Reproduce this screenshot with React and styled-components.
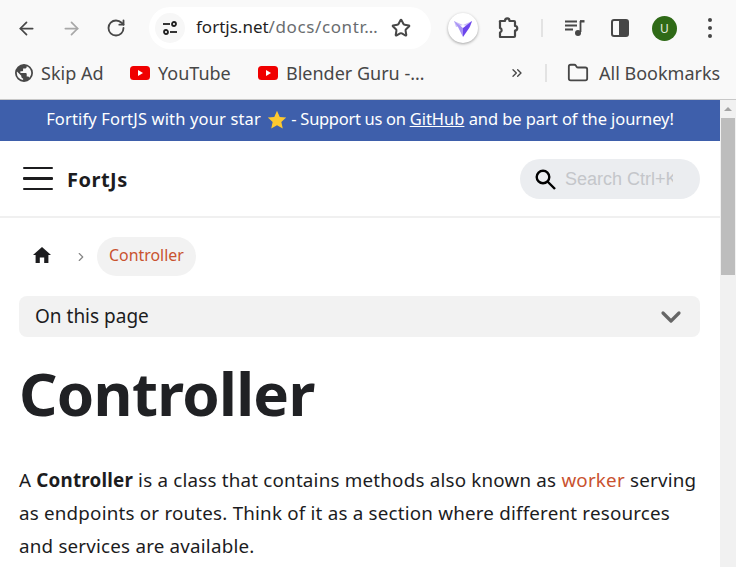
import React from 'react';
import styled, { createGlobalStyle } from 'styled-components';
import { ArrowLeft, ArrowRight, RotateCw, Star, Folder, ChevronsRight, ChevronRight, ChevronDown } from 'lucide-react';

const uiFont = '"Noto Sans", "Open Sans", sans-serif';

const GlobalStyle = createGlobalStyle`
  html, body {
    margin: 0;
    padding: 0;
    background: #fff;
    overflow: hidden;
  }
  * { box-sizing: border-box; }
`;

const Window = styled.div`
  width: 736px;
  height: 567px;
  display: flex;
  flex-direction: column;
  overflow: hidden;
  font-family: ${uiFont};
`;
const Toolbar = styled.div`
  height: 56px;
  flex: none;
  display: flex;
  align-items: center;
  background: #f9f9f9;
  padding-left: 14px;
`;
const NavButton = styled.div`
  width: 24px;
  height: 24px;
  margin-left: ${(p) => p.$before || 0}px;
  margin-right: ${(p) => p.$gap || 0}px;
  display: flex;
  align-items: center;
  justify-content: center;
  color: ${(p) => p.$color || '#474747'};
  flex: none;
`;
const AddressBar = styled.div`
  width: 282px;
  height: 42px;
  flex: none;
  margin-left: 21px;
  border-radius: 21px;
  background: #fff;
  display: flex;
  align-items: center;
  padding: 0 20px 0 6px;
`;
const SiteChip = styled.div`
  width: 30px;
  height: 30px;
  flex: none;
  border-radius: 50%;
  background: #f7f7f7;
  display: flex;
  align-items: center;
  justify-content: center;
`;
const Url = styled.div`
  margin-left: 11px;
  flex: 1;
  font-size: 17px;
  line-height: 24px;
  margin-top: -2px;
  color: #1f1f1f;
  white-space: nowrap;
  overflow: hidden;
  span {
    color: #6a6d70;
    letter-spacing: 0.6px;
  }
`;
const ExtensionBadge = styled.div`
  width: 30px;
  height: 30px;
  flex: none;
  margin-left: 17px;
  border-radius: 50%;
  background: #fff;
  box-shadow: 0 1px 3px rgba(0, 0, 0, 0.35);
  display: flex;
  align-items: center;
  justify-content: center;
`;
const Divider = styled.div`
  width: 2px;
  height: ${(p) => p.$h || 20}px;
  flex: none;
  background: #e3e3e3;
  margin: ${(p) => p.$margin || '0'};
`;
const Avatar = styled.div`
  width: 25px;
  height: 25px;
  flex: none;
  margin-right: 21px;
  border-radius: 50%;
  background: #2f6a17;
  color: #e6efe0;
  font-size: 12px;
  display: flex;
  align-items: center;
  justify-content: center;
`;
const Dots = styled.div`
  display: flex;
  flex-direction: column;
  align-items: center;
  gap: 4px;
  i {
    display: block;
    width: 4px;
    height: 4px;
    border-radius: 50%;
    background: #474747;
  }
`;
const BookmarksBar = styled.div`
  height: 44px;
  flex: none;
  display: flex;
  align-items: center;
  background: #f9f9f9;
  border-bottom: 1px solid #c8c8c8;
  padding: 0 0 10px 15px;
`;
const Bookmark = styled.div`
  display: flex;
  align-items: center;
  flex: none;
  gap: ${(p) => p.$gap || 8}px;
  width: ${(p) => p.$w}px;
  font-size: 18px;
  line-height: 24px;
  color: #474747;
  white-space: nowrap;
`;
const Viewport = styled.div`
  flex: 1;
  min-height: 0;
  display: flex;
`;
const Page = styled.div`
  flex: 1;
  min-width: 0;
  background: #fff;
  color: #1c1c1e;
`;
const Banner = styled.div`
  height: 41px;
  padding-bottom: 4px;
  background: #3e5fab;
  color: #fff;
  font-size: 16.5px;
  display: flex;
  align-items: center;
  justify-content: center;
  white-space: pre;
  a { color: #fff; }
`;
const BannerText = styled.span`
  letter-spacing: ${(p) => p.$track || 0}px;
`;
const BannerStar = styled.svg`
  margin: 3px 0 0 2px;
  flex: none;
`;
const Header = styled.div`
  height: 77px;
  display: flex;
  align-items: center;
  padding: 0 20px 0 23px;
  border-bottom: 2px solid #f0f0f0;
`;
const Burger = styled.div`
  width: 30px;
  height: 23px;
  display: flex;
  flex-direction: column;
  justify-content: space-between;
  flex: none;
  i {
    display: block;
    height: 2.4px;
    background: #1c1c1e;
    border-radius: 1px;
  }
`;
const Brand = styled.div`
  margin: 2px 0 0 14px;
  font-size: 20px;
  font-weight: 700;
  letter-spacing: 0.5px;
  flex: 1;
`;
const SearchBox = styled.div`
  width: 180px;
  height: 40px;
  border-radius: 20px;
  background: #ebedf0;
  display: flex;
  align-items: center;
  padding-left: 14px;
  gap: 9px;
`;
const Placeholder = styled.div`
  width: 108px;
  overflow: hidden;
  white-space: nowrap;
  font-family: "Liberation Sans", Arial, sans-serif;
  font-size: 18px;
  padding-top: 1px;
  color: #c4c6ca;
`;
const Main = styled.div`
  padding: 18px 20px 0 19px;
`;
const Breadcrumbs = styled.div`
  display: flex;
  align-items: center;
  height: 41px;
`;
const HomeLink = styled.div`
  width: 55px;
  padding: 0 0 3px 14px;
  display: flex;
  align-items: center;
  flex: none;
`;
const Crumb = styled.div`
  height: 39px;
  padding: 0 12px 4px;
  margin-left: 9px;
  border-radius: 20px;
  background: #f2f2f2;
  color: #c9522f;
  font-size: 15.9px;
  display: flex;
  align-items: center;
`;
const Toc = styled.div`
  height: 41px;
  margin-top: 19px;
  border-radius: 8px;
  background: #f2f2f2;
  display: flex;
  align-items: center;
  justify-content: space-between;
  padding: 0 13px 0 16px;
  font-size: 19px;
  color: #1c1c1e;
  span { margin-top: -2px; }
`;
const Title = styled.h1`
  margin: 16px 0 0;
  font-size: 60px;
  line-height: 80px;
  font-weight: 700;
  letter-spacing: -0.7px;
  color: #202124;
`;
const Paragraph = styled.p`
  margin: 31px 0 0;
  font-size: 18.8px;
  line-height: 33px;
  white-space: nowrap;
  letter-spacing: 0.2px;
  a { color: #c9522f; }
  strong { font-weight: 700; }
`;
const Scrollbar = styled.div`
  width: 16px;
  flex: none;
  background: #f1f1f1;
  display: flex;
  flex-direction: column;
  align-items: center;
`;
const ScrollArrow = styled.div`
  height: 18px;
  padding-top: 7px;
  flex: none;
  &::before {
    content: '';
    display: block;
    border-left: 4px solid transparent;
    border-right: 4px solid transparent;
    border-bottom: 4px solid #a3a3a3;
  }
`;
const ScrollThumb = styled.div`
  width: 14px;
  height: 157px;
  background: #bdbdbd;
`;

const TuneIcon = () => (
  <svg width="16" height="16" viewBox="0 0 16 16" fill="none" stroke="#1f1f1f" strokeWidth="1.8">
    <path d="M1 4h7" />
    <circle cx="12" cy="4" r="2" />
    <path d="M15 12H8" />
    <circle cx="4" cy="12" r="2" />
  </svg>
);

const PrismIcon = () => (
  <svg width="20" height="20" viewBox="0 0 20 20">
    <path d="M1 3l9 4 9-4-2 6-7-2-7 2z" fill="#cbbff8" />
    <path d="M1 3l6 4.500 3 2.500v9L5 9z" fill="#a893f5" />
    <path d="M10 10l9-7-2.500 6.500L10 19z" fill="#6c45ec" />
  </svg>
);

const PuzzleIcon = () => (
  <svg width="22" height="22" viewBox="0 0 22 22" fill="none" stroke="#474747" strokeWidth="2.2" strokeLinejoin="round">
    <path d="M3 4h5c0-3.500 4.500-3.500 4.500 0H17a1 1 0 0 1 1 1v4c3 0 3 4.500 0 4.500V19a1 1 0 0 1-1 1H3v-4.500c2.200-.5 2.200-4 0-4.500V5a1 1 0 0 1 0-1z" />
  </svg>
);

const QueueIcon = () => (
  <svg width="20" height="20" viewBox="0 0 20 20" fill="none" stroke="#474747" strokeWidth="1.8">
    <path d="M0 3.500h12M0 7.500h12M0 11.500h8" />
    <path d="M15.500 3v11" />
    <path d="M15 3.300h4.500" strokeWidth="2.400" />
    <circle cx="13" cy="15" r="3" fill="#474747" stroke="none" />
  </svg>
);

const PanelIcon = () => (
  <svg width="18" height="18" viewBox="0 0 18 18">
    <rect x="1" y="1" width="16" height="16" rx="2" fill="none" stroke="#474747" strokeWidth="2" />
    <rect x="8" y="1" width="9" height="16" fill="#474747" />
  </svg>
);

const GlobeIcon = () => (
  <svg width="18" height="18" viewBox="2 2 20 20">
    <path
      fill="#474747"
      d="M12 2a10 10 0 1 0 0 20 10 10 0 0 0 0-20zM4 12c0-.6.1-1.200.2-1.800L9 15v1c0 1.100.9 2 2 2v1.900A8 8 0 0 1 4 12zm13.900 5.400c-.3-.8-1-1.400-1.900-1.400h-1v-3c0-.6-.4-1-1-1H8v-2h2c.6 0 1-.4 1-1V7h2c1.100 0 2-.9 2-2v-.4a8 8 0 0 1 2.900 12.800z"
    />
  </svg>
);

const YoutubeIcon = () => (
  <svg width="20" height="14" viewBox="0 0 20 14">
    <rect width="20" height="14" rx="3.500" fill="#f00000" />
    <path d="M8 4l5 3-5 3z" fill="#fff" />
  </svg>
);

const HomeIcon = () => (
  <svg width="18" height="16" viewBox="0 0 18 16">
    <path d="M9 0L0 8h2.600v8h4.200v-5.500h4.400V16h4.200V8H18z" fill="#1c1c1e" />
  </svg>
);

const SearchIcon = () => (
  <svg width="22" height="22" viewBox="0 0 22 22" fill="none" stroke="#000" strokeWidth="2.400">
    <circle cx="9" cy="9" r="6.300" />
    <path d="M13.500 13.500L21 21" />
  </svg>
);

export default function App() {
  return (
    <Window>
      <GlobalStyle />
      <Toolbar>
        <NavButton $gap={21}><ArrowLeft size={21} strokeWidth={2} /></NavButton>
        <NavButton $color="#a8a8a8" $gap={21}><ArrowRight size={21} strokeWidth={2} /></NavButton>
        <NavButton><RotateCw size={20} strokeWidth={2.2} /></NavButton>
        <AddressBar>
          <SiteChip><TuneIcon /></SiteChip>
          <Url>fortjs.net<span>/docs/contr…</span></Url>
          <Star size={20} strokeWidth={2.4} color="#474747" />
        </AddressBar>
        <ExtensionBadge><PrismIcon /></ExtensionBadge>
        <NavButton $before={18} $gap={21}><PuzzleIcon /></NavButton>
        <Divider $h={18} $margin="0 20px 0 0" />
        <NavButton $gap={21}><QueueIcon /></NavButton>
        <NavButton $gap={20}><PanelIcon /></NavButton>
        <Avatar>U</Avatar>
        <NavButton><Dots><i /><i /><i /></Dots></NavButton>
      </Toolbar>
      <BookmarksBar>
        <Bookmark $w={115}><GlobeIcon />Skip Ad</Bookmark>
        <Bookmark $w={128}><YoutubeIcon />YouTube</Bookmark>
        <Bookmark $w={251}><YoutubeIcon />Blender Guru -…</Bookmark>
        <ChevronsRight size={16} color="#474747" />
        <Divider $h={18} $margin="0 20px 0 20px" />
        <Bookmark $w={160} $gap={10}><Folder size={22} strokeWidth={2} />All Bookmarks</Bookmark>
      </BookmarksBar>
      <Viewport>
        <Page>
          <Banner>
            <BannerText $track={0.15}>{'Fortify FortJS with your star '}</BannerText>
            <BannerStar width="20" height="20" viewBox="0 0 24 24">
              <path d="M12 1l3.300 7.300 7.700.8-5.800 5.300 1.700 7.800L12 18.200l-6.900 4 1.700-7.800L1 9.100l7.700-.8z" fill="#fdc92f" />
            </BannerStar>
            <BannerText $track={-0.3}>{' - Support us on '}</BannerText>
            <a href="#github">GitHub</a>
            <BannerText $track={-0.07}>{' and be part of the journey!'}</BannerText>
          </Banner>
          <Header>
            <Burger><i /><i /><i /></Burger>
            <Brand>FortJs</Brand>
            <SearchBox>
              <SearchIcon />
              <Placeholder>Search Ctrl+K</Placeholder>
            </SearchBox>
          </Header>
          <Main>
            <Breadcrumbs>
              <HomeLink><HomeIcon /></HomeLink>
              <ChevronRight size={14} strokeWidth={2} color="#858585" />
              <Crumb>Controller</Crumb>
            </Breadcrumbs>
            <Toc>
              <span>On this page</span>
              <ChevronDown size={32} strokeWidth={2.4} color="#666" />
            </Toc>
            <Title>Controller</Title>
            <Paragraph>
              A <strong>Controller</strong> is a class that contains methods also known as <a>worker</a> serving<br />
              as endpoints or routes. Think of it as a section where different resources<br />
              and services are available.
            </Paragraph>
          </Main>
        </Page>
        <Scrollbar>
          <ScrollArrow />
          <ScrollThumb />
        </Scrollbar>
      </Viewport>
    </Window>
  );
}
